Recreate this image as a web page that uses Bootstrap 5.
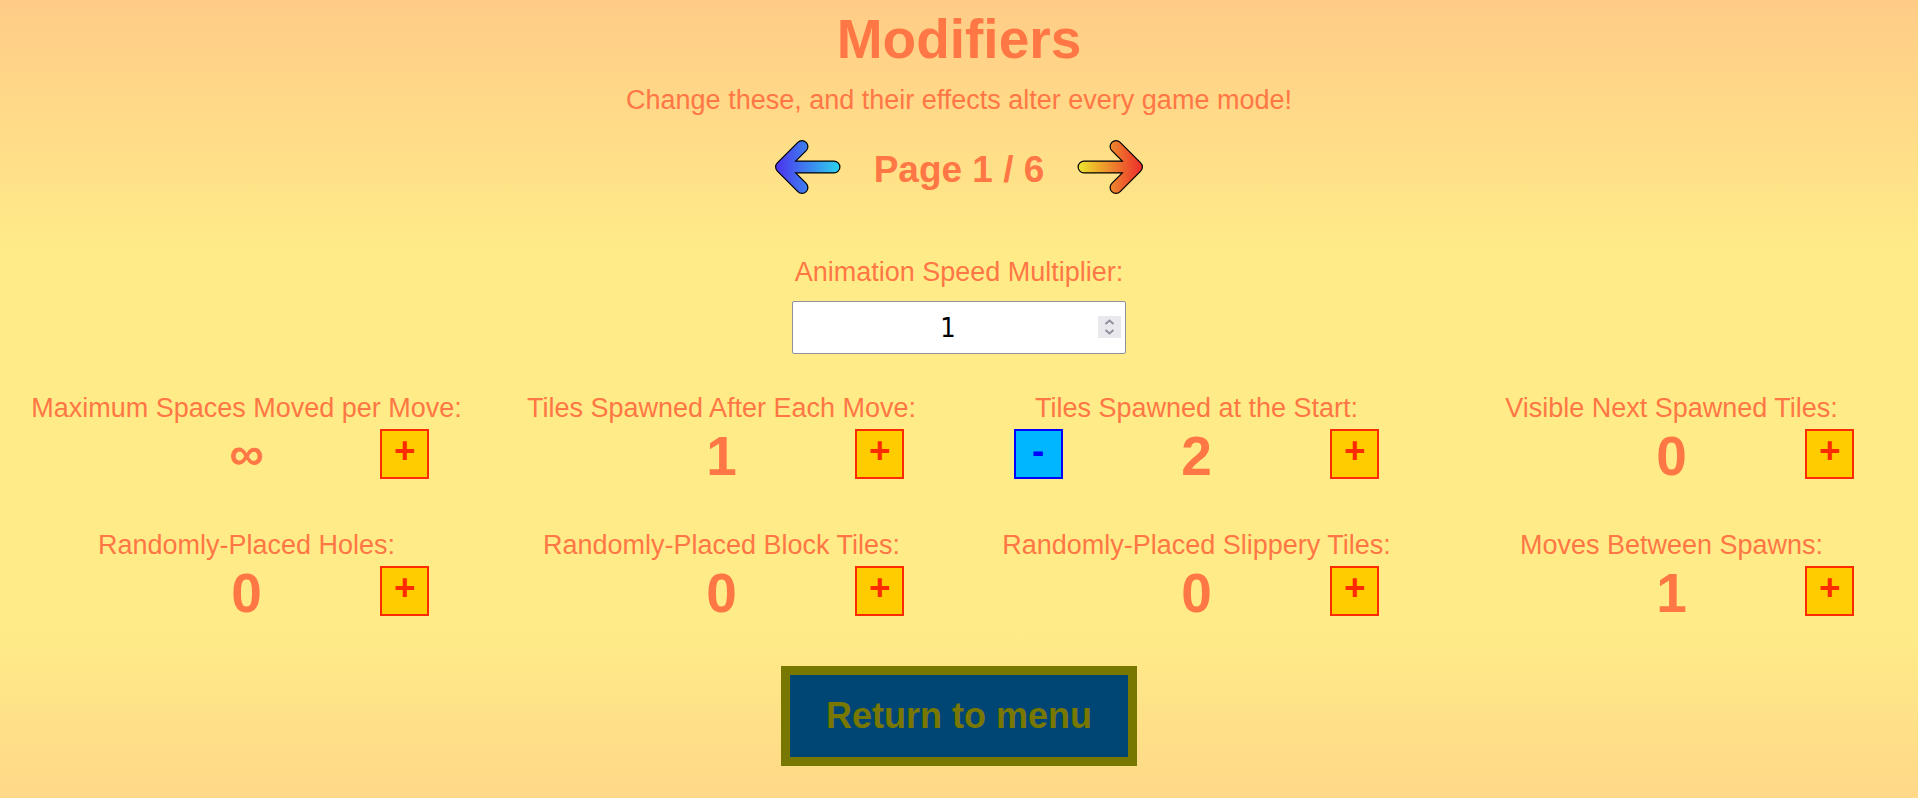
<!DOCTYPE html>
<html lang="en">
<head>
<meta charset="utf-8">
<meta name="viewport" content="width=device-width, initial-scale=1">
<title>Modifiers</title>
<link href="https://cdn.jsdelivr.net/npm/bootstrap@5.3.0/dist/css/bootstrap.min.css" rel="stylesheet">
<style>
body{font-family:"Liberation Sans",Arial,sans-serif;font-size:27px;line-height:32px;color:#ff7744;min-height:100vh;
background:linear-gradient(#ffcc88,#ffec88 33%,#ffec88 78%,#ffd888) no-repeat}
.page-title{font-size:55px;line-height:64px;padding-top:7px}
.subtitle{padding-top:13px}
.pager{gap:33px;margin-top:24px}
.page-count{font-size:37px;line-height:42px;padding-top:9px}
.arrow{width:66px;height:54px}
.speed{width:334px;max-width:100%;margin-top:62px}
.speed-box{margin-top:13px}
.speed-input{width:100%;height:53px;border:1px solid #8f8f9d;border-radius:2px;font:27px "DejaVu Sans Condensed","DejaVu Sans",sans-serif;color:#000;background:#fff;text-align:center;padding:0 26px 0 4px;appearance:textfield;-moz-appearance:textfield}
.speed-input::-webkit-inner-spin-button{-webkit-appearance:none;margin:0}
.spinner{right:5px;top:15px;width:23px;height:22px;background:#e9e9ed;pointer-events:none}
.modifiers{margin-top:38px;row-gap:41px;padding:0 9px}
.amount{font-size:55px;line-height:64px}
.amount-infinite{font-size:48px;line-height:60px}
.step{width:49px;height:50px;border:2px solid;font-size:37px;line-height:40px;padding:0 0 6px;margin-top:5px}
.step-up{color:#ff2b00;background:#ffcc00}
.step-down{color:#0000ff;background:#00b6ff}
.menu-btn{font-size:36px;line-height:42px;border:9px solid #787800;background:#004675;color:#787800;padding:20px 36px;margin:41px 0 24px}
</style>
</head>
<body>
<main class="container-fluid p-0 text-center">
<h1 class="page-title fw-bold m-0">Modifiers</h1>
<p class="subtitle m-0">Change these, and their effects alter every game mode!</p>
<nav class="pager d-flex justify-content-center align-items-start" aria-label="Modifier pages">
<button class="border-0 bg-transparent p-0 d-flex" type="button" aria-label="Previous page">
<svg class="arrow" viewBox="0 0 66 54" fill="none" stroke-linecap="round" stroke-linejoin="round"><defs><linearGradient id="cool" gradientUnits="userSpaceOnUse" x1="0" y1="0" x2="66" y2="0"><stop stop-color="#4d2fee"/><stop offset="1" stop-color="#2cd6ee"/></linearGradient></defs><path d="M27 6.500 6.500 27 27 47.500M6.500 27H59" stroke="#000" stroke-width="13"/><path d="M27 6.500 6.500 27 27 47.500M6.500 27H59" stroke="url(#cool)" stroke-width="10.600"/></svg>
</button>
<h2 class="page-count fw-bold m-0">Page 1 / 6</h2>
<button class="border-0 bg-transparent p-0 d-flex" type="button" aria-label="Next page">
<svg class="arrow" viewBox="0 0 66 54" fill="none" stroke-linecap="round" stroke-linejoin="round"><defs><linearGradient id="warm" gradientUnits="userSpaceOnUse" x1="0" y1="0" x2="66" y2="0"><stop stop-color="#ece92c"/><stop offset="1" stop-color="#ee2a2c"/></linearGradient></defs><path d="M39 6.500 59.500 27 39 47.500M59.500 27H7" stroke="#000" stroke-width="13"/><path d="M39 6.500 59.500 27 39 47.500M59.500 27H7" stroke="url(#warm)" stroke-width="10.600"/></svg>
</button>
</nav>
<section class="speed d-inline-block">
<label class="d-block" for="speed">Animation Speed Multiplier:</label>
<div class="speed-box position-relative d-flex">
<input class="speed-input" id="speed" type="number" value="1">
<svg class="spinner position-absolute" viewBox="0 0 23 22" fill="none" stroke="#8f8f9d" stroke-width="2"><path d="M7.500 8 11.500 4.500 15.500 8M7.500 14 11.500 17.500 15.500 14"/></svg>
</div>
</section>
<section class="modifiers row g-0">
<div class="col-12 col-md-6 col-xl-3"><div>Maximum Spaces Moved per Move:</div><div class="row g-0"><strong class="amount amount-infinite col-4 offset-4">∞</strong><div class="col-4"><button class="step step-up fw-bold" type="button">+</button></div></div></div>
<div class="col-12 col-md-6 col-xl-3"><div>Tiles Spawned After Each Move:</div><div class="row g-0"><strong class="amount col-4 offset-4">1</strong><div class="col-4"><button class="step step-up fw-bold" type="button">+</button></div></div></div>
<div class="col-12 col-md-6 col-xl-3"><div>Tiles Spawned at the Start:</div><div class="row g-0"><div class="col-4"><button class="step step-down fw-bold" type="button">-</button></div><strong class="amount col-4">2</strong><div class="col-4"><button class="step step-up fw-bold" type="button">+</button></div></div></div>
<div class="col-12 col-md-6 col-xl-3"><div>Visible Next Spawned Tiles:</div><div class="row g-0"><strong class="amount col-4 offset-4">0</strong><div class="col-4"><button class="step step-up fw-bold" type="button">+</button></div></div></div>
<div class="col-12 col-md-6 col-xl-3"><div>Randomly-Placed Holes:</div><div class="row g-0"><strong class="amount col-4 offset-4">0</strong><div class="col-4"><button class="step step-up fw-bold" type="button">+</button></div></div></div>
<div class="col-12 col-md-6 col-xl-3"><div>Randomly-Placed Block Tiles:</div><div class="row g-0"><strong class="amount col-4 offset-4">0</strong><div class="col-4"><button class="step step-up fw-bold" type="button">+</button></div></div></div>
<div class="col-12 col-md-6 col-xl-3"><div>Randomly-Placed Slippery Tiles:</div><div class="row g-0"><strong class="amount col-4 offset-4">0</strong><div class="col-4"><button class="step step-up fw-bold" type="button">+</button></div></div></div>
<div class="col-12 col-md-6 col-xl-3"><div>Moves Between Spawns:</div><div class="row g-0"><strong class="amount col-4 offset-4">1</strong><div class="col-4"><button class="step step-up fw-bold" type="button">+</button></div></div></div>
</section>
<button class="menu-btn fw-bold" type="button">Return to menu</button>
</main>
<script src="https://cdn.jsdelivr.net/npm/bootstrap@5.3.0/dist/js/bootstrap.bundle.min.js"></script>
</body>
</html>
